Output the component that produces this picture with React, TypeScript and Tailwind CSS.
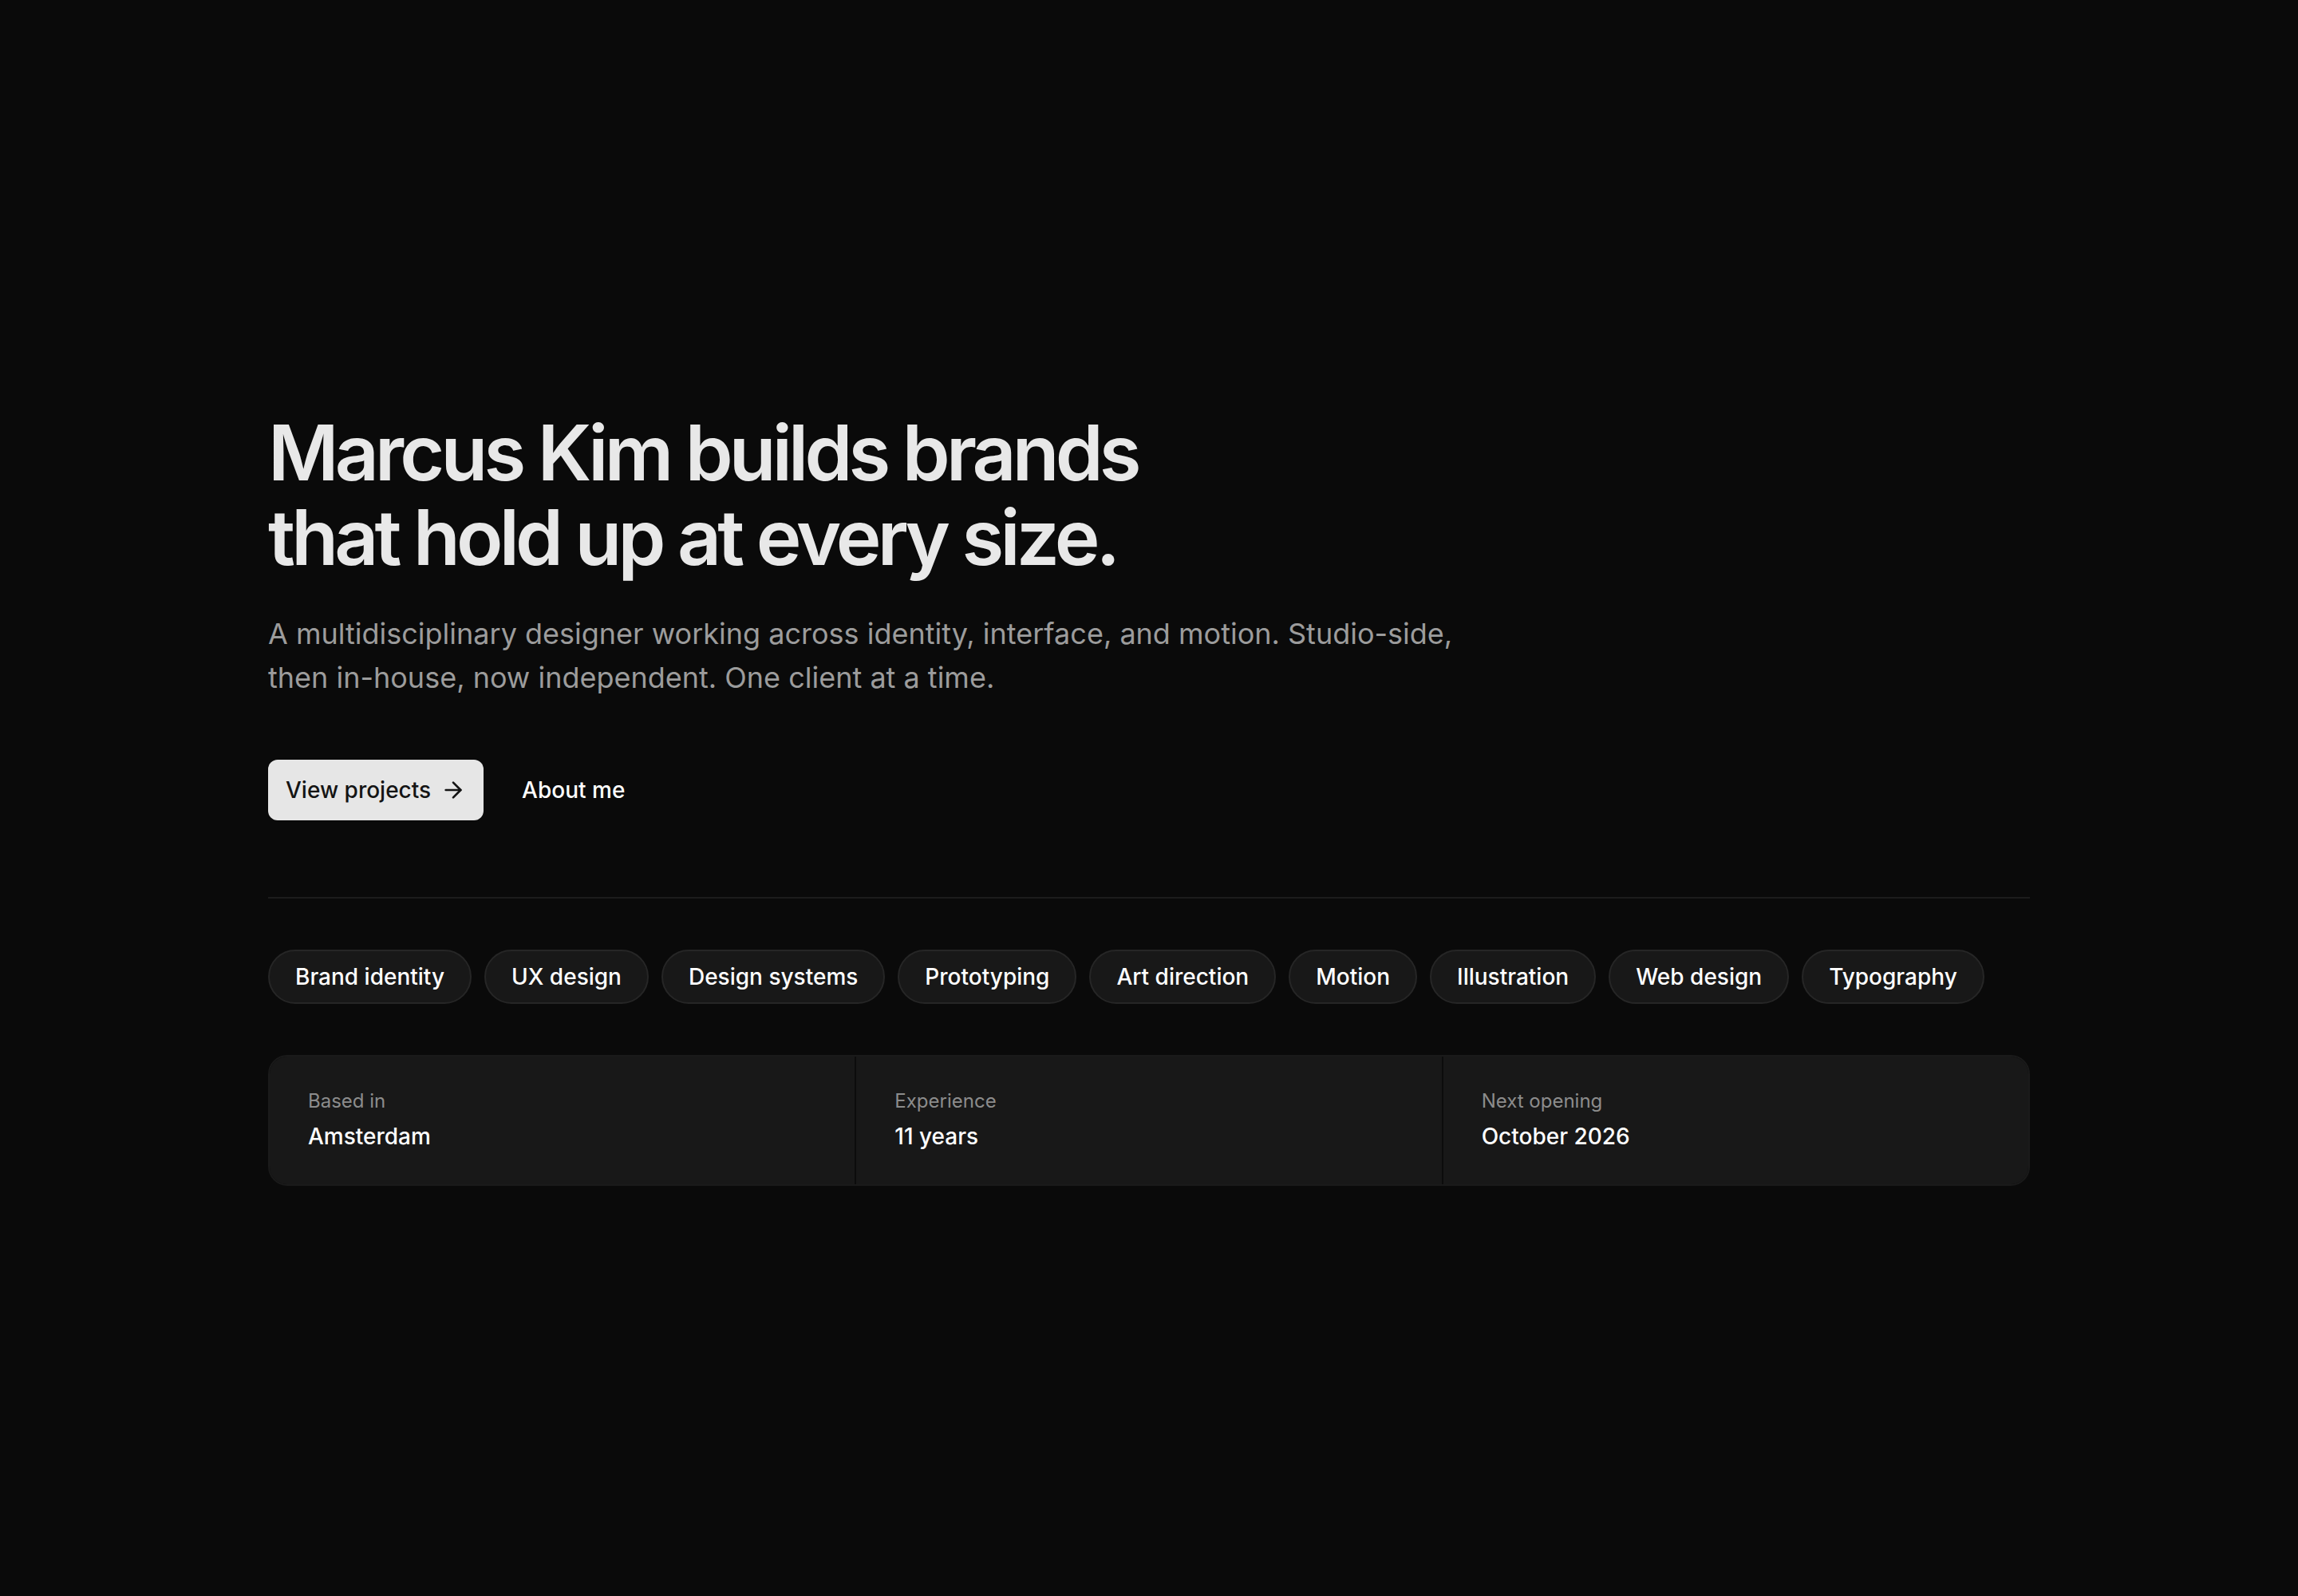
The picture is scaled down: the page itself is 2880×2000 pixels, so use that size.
import { ArrowRight } from 'lucide-react'

const skills = [
  'Brand identity',
  'UX design',
  'Design systems',
  'Prototyping',
  'Art direction',
  'Motion',
  'Illustration',
  'Web design',
  'Typography',
]

const facts = [
  { label: 'Based in', value: 'Amsterdam' },
  { label: 'Experience', value: '11 years' },
  { label: 'Next opening', value: 'October 2026' },
]

export default function App() {
  return (
    <div
      className="min-h-screen bg-[#0a0a0a] text-white flex items-center"
      style={{ fontFamily: 'Inter, "Noto Sans", sans-serif' }}
    >
      <main className="mx-auto w-full max-w-[2304px] px-12">
        <h1 className="text-[96px] font-semibold leading-[1.11] tracking-[-0.05em] text-[#e8e8e8]">
          Marcus Kim builds brands
          <br />
          that hold up at every size.
        </h1>
        <p className="mt-10 max-w-[1536px] text-[36px] leading-[1.53] text-[#9c9c9c]">
          A multidisciplinary designer working across identity, interface, and motion. Studio-side,
          then in-house, now independent. One client at a time.
        </p>

        <div className="mt-[75px] flex items-center gap-6">
          <a
            href="#projects"
            className="flex items-center gap-3 rounded-xl bg-[#e6e6e6] px-[22px] py-[18px] text-[28px] leading-[40px] font-medium text-[#141414]"
          >
            View projects
            <ArrowRight size={32} strokeWidth={2} />
          </a>
          <a
            href="#about"
            className="px-6 py-[18px] text-[28px] leading-[40px] font-medium text-white"
          >
            About me
          </a>
        </div>

        <div className="mt-24 border-t-2 border-[#1c1c1c] pt-16">
          <div className="flex flex-wrap gap-4">
            {skills.map(s => (
              <span
                key={s}
                className="rounded-full border-2 border-[#262626] bg-[#181818] px-8 py-3 text-[28px] leading-[40px] font-medium text-white"
              >
                {s}
              </span>
            ))}
          </div>

          <div className="mt-16 grid grid-cols-3 gap-[2px] overflow-hidden rounded-3xl border-2 border-[#1a1a1a] bg-[#0c0c0c]">
            {facts.map(f => (
              <div key={f.label} className="bg-[#181818] px-12 py-10">
                <div className="text-[24px] leading-[32px] text-[#8c8c8c]">{f.label}</div>
                <div className="mt-2 text-[28px] leading-[40px] font-medium text-white">
                  {f.value}
                </div>
              </div>
            ))}
          </div>
        </div>
      </main>
    </div>
  )
}
